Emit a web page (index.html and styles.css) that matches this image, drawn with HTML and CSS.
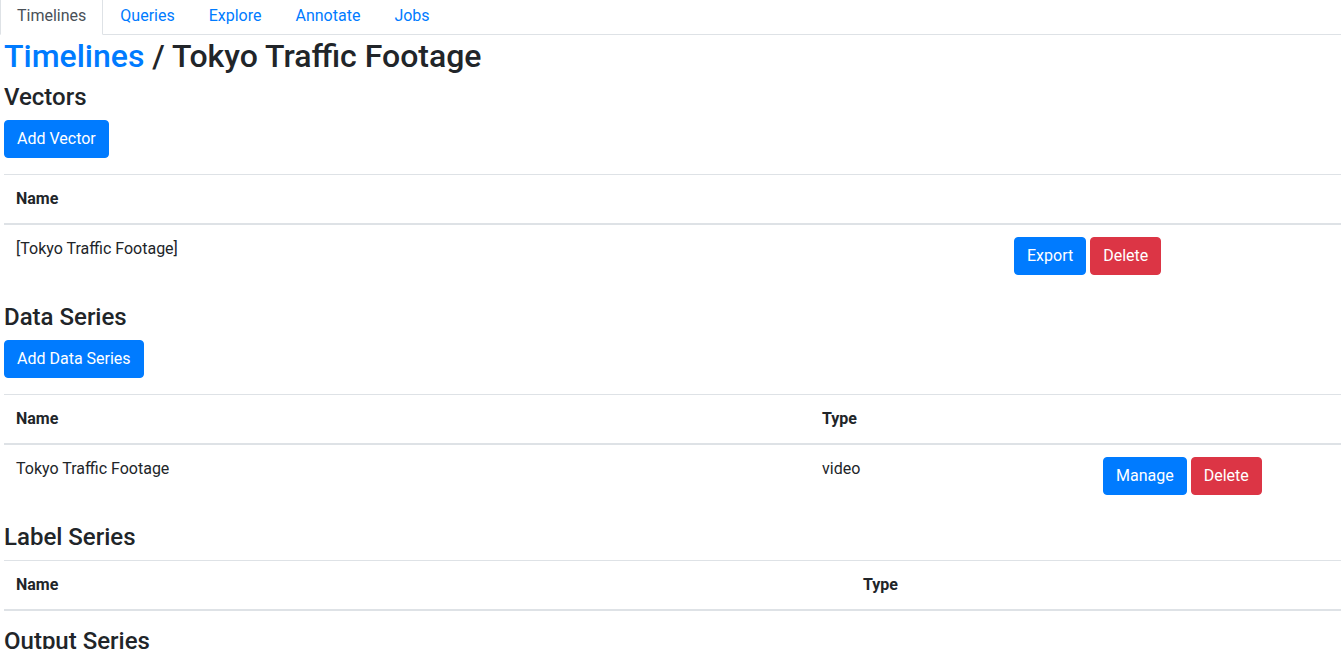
FILE: index.html
```html
<!DOCTYPE html>
<html lang="en">
<head>
<meta charset="utf-8">
<title>Timelines / Tokyo Traffic Footage</title>
<link rel="stylesheet" href="styles.css">
</head>
<body>
<nav class="tabs">
  <a class="tab active" href="#">Timelines</a>
  <a class="tab" href="#">Queries</a>
  <a class="tab" href="#">Explore</a>
  <a class="tab" href="#">Annotate</a>
  <a class="tab" href="#">Jobs</a>
</nav>
<main class="page">
  <h2 class="title"><a class="crumb" href="#">Timelines</a> / Tokyo Traffic Footage</h2>

  <h4 class="section">Vectors</h4>
  <div class="actions-top"><button class="btn primary">Add Vector</button></div>
  <table class="table">
    <thead>
      <tr><th class="col-vname">Name</th><th></th></tr>
    </thead>
    <tbody>
      <tr>
        <td>[Tokyo Traffic Footage]</td>
        <td><button class="btn primary">Export</button> <button class="btn danger">Delete</button></td>
      </tr>
    </tbody>
  </table>

  <h4 class="section">Data Series</h4>
  <div class="actions-top"><button class="btn primary">Add Data Series</button></div>
  <table class="table">
    <thead>
      <tr><th class="col-dname">Name</th><th class="col-dtype">Type</th><th></th></tr>
    </thead>
    <tbody>
      <tr>
        <td>Tokyo Traffic Footage</td>
        <td>video</td>
        <td><button class="btn primary">Manage</button> <button class="btn danger">Delete</button></td>
      </tr>
    </tbody>
  </table>

  <h4 class="section">Label Series</h4>
  <table class="table">
    <thead>
      <tr><th class="col-lname">Name</th><th>Type</th></tr>
    </thead>
    <tbody></tbody>
  </table>

  <h4 class="section">Output Series</h4>
</main>
</body>
</html>
```

FILE: styles.css
```css
* { box-sizing: border-box; }

html, body {
  margin: 0;
  padding: 0;
}

body {
  font-family: Roboto, "Liberation Sans", Arial, sans-serif;
  font-size: 16px;
  line-height: 1.5;
  color: #212529;
  background: #fff;
}

a { color: #007bff; text-decoration: none; }

.tabs {
  display: flex;
  margin-top: -3px;
  border-bottom: 1px solid #dee2e6;
}

.tab {
  display: block;
  padding: 6px 16px;
  border: 1px solid transparent;
  border-top-left-radius: 4px;
  border-top-right-radius: 4px;
  margin-bottom: -1px;
  color: #007bff;
}

.tab.active {
  color: #495057;
  background: #fff;
  border-color: #dee2e6 #dee2e6 #fff;
}

.page {
  padding-left: 4px;
  padding-top: 2px;
}

.title {
  margin: 0 0 8px;
  font-size: 32px;
  font-weight: 500;
  line-height: 1.2;
}

.section {
  margin: 0 0 8px;
  font-size: 24px;
  font-weight: 500;
  line-height: 1.2;
}

.actions-top {
  margin-bottom: 16px;
}

.btn {
  display: inline-block;
  font-family: inherit;
  font-size: 16px;
  line-height: 1.5;
  font-weight: 400;
  padding: 6px 12px;
  border: 1px solid transparent;
  border-radius: 4px;
  color: #fff;
  cursor: pointer;
  vertical-align: middle;
}

.btn.primary { background: #007bff; border-color: #007bff; }
.btn.danger { background: #dc3545; border-color: #dc3545; }

.table {
  width: 100%;
  border-collapse: collapse;
  margin-bottom: 16px;
}

.table th,
.table td {
  padding: 12px;
  text-align: left;
  vertical-align: top;
  border-top: 1px solid #dee2e6;
}

.table th { font-weight: 700; }

.table thead th {
  vertical-align: bottom;
  border-bottom: 2px solid #dee2e6;
}

.col-vname { width: 998px; }
.col-dname { width: 806px; }
.col-dtype { width: 281px; }
.col-lname { width: 847px; }
```
